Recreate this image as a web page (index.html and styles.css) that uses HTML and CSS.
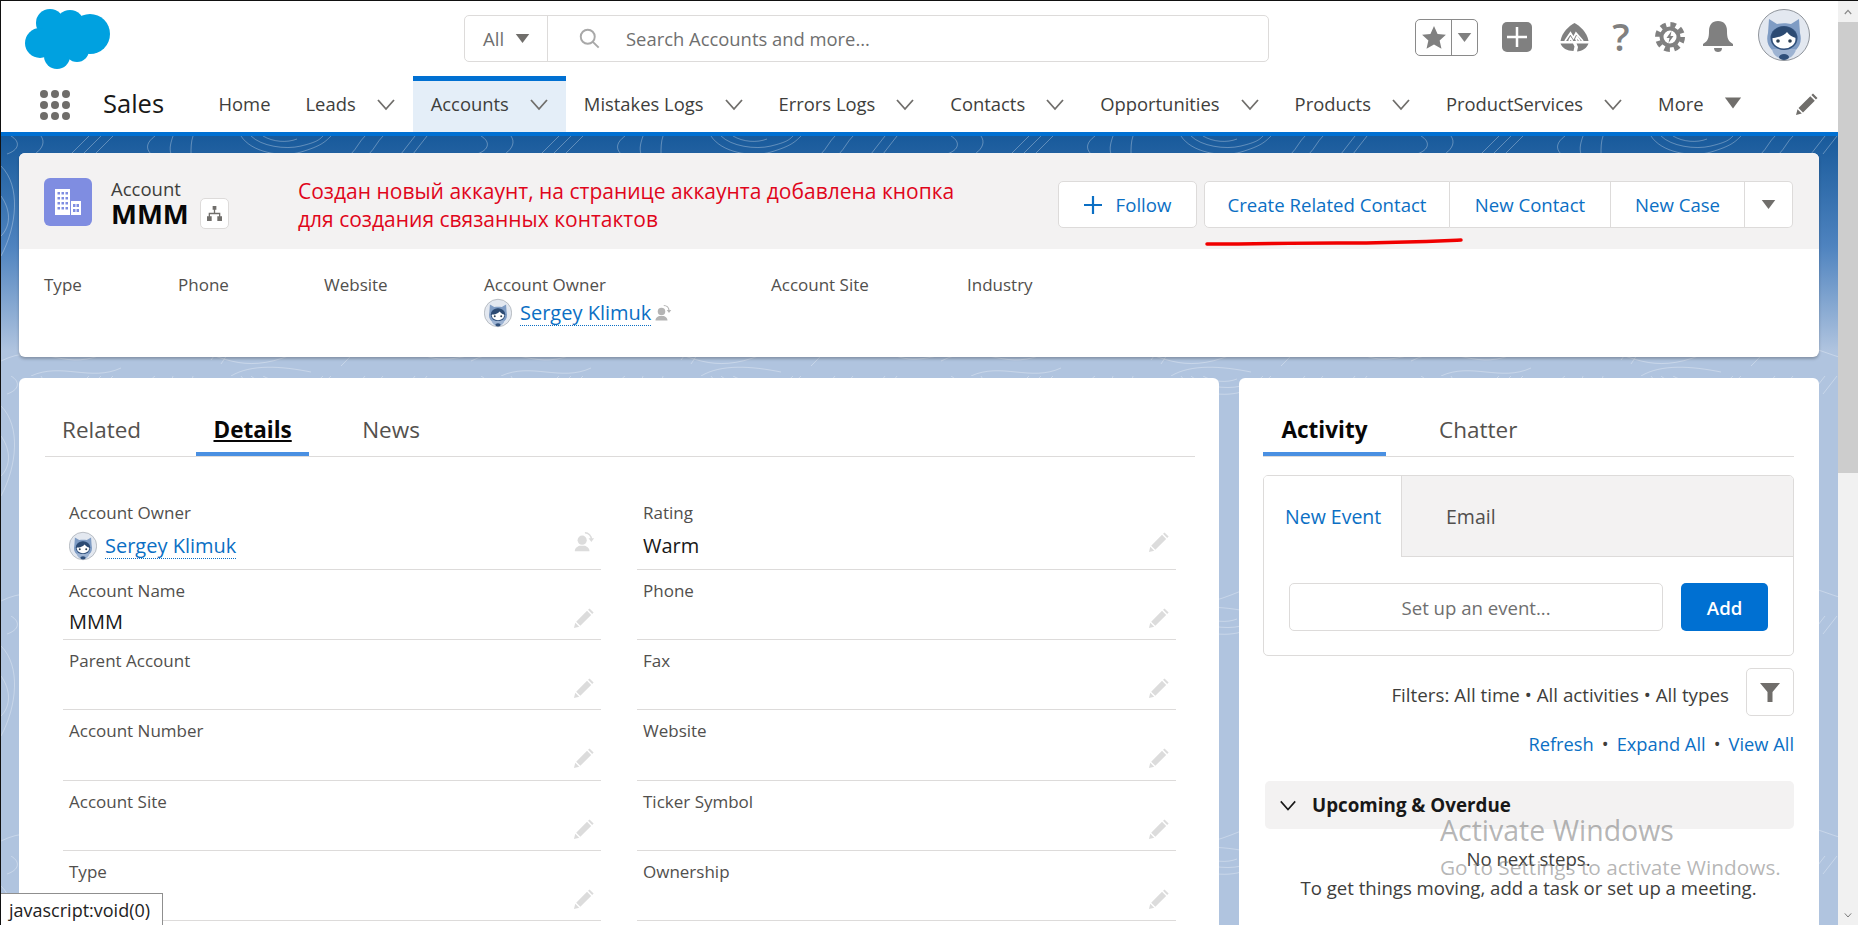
FILE: index.html
```html
<!DOCTYPE html>
<html lang="en">
<head>
    <meta charset="UTF-8">
    <title>MMM | Salesforce</title>
    <link rel="stylesheet" href="styles.css">
</head>
<body>
    <svg class="icon-defs" width="0" height="0">
        <defs>
            <symbol id="pencil" viewBox="0 0 24 24"><path d="M18 1.5l4.5 4.5-1.6 1.6-4.5-4.5zM15.3 4.2l4.5 4.5L8 20.500l-4.500-4.500zM2.500 17.200l4.300 4.300-5.800 1.500z"/></symbol>
            <symbol id="chevron" viewBox="0 0 20 20"><path d="M2 6l8 9 8-9" fill="none" stroke="currentColor" stroke-width="1.800"/></symbol>
            <symbol id="caret" viewBox="0 0 20 20"><path d="M1 4h18l-9 12z"/></symbol>
            <symbol id="person-swap" viewBox="0 0 24 24"><circle cx="10" cy="10" r="5"/><path d="M2 22c0-4 3-5 5-6h6c2 1 5 2 5 6z"/><path d="M13 2c4 0 7 3 7 7" fill="none" stroke="currentColor" stroke-width="1.600"/><path d="M17 8h6l-3 4z"/></symbol>
            <symbol id="astro" viewBox="0 0 52 52">
                <circle cx="26" cy="26" r="25.500" fill="#e3e8f0" stroke="#8f949b"/>
                <path d="M11 10l8 5c4-1 10-1 14 0l8-5 1 14c2 8 0 13-4 17H14c-4-4-6-9-4-17z" fill="#7f9cc4"/>
                <path d="M14 40h24c-1 6-6 10-12 10s-11-4-12-10z" fill="#9db3d2"/>
                <ellipse cx="26" cy="48" rx="5" ry="3" fill="#2f4f7a"/>
                <ellipse cx="26" cy="29" rx="13.500" ry="12" fill="#2f4f7a"/>
                <ellipse cx="26" cy="30" rx="11.500" ry="9.500" fill="#fff"/>
                <path d="M14 29c0-7 6-11 12-11s12 4 12 11c-4-1-7-3-9-6-2 3-9 6-15 6z" fill="#2c4a72"/>
                <circle cx="20" cy="32" r="1.800" fill="#2c3e50"/><circle cx="32" cy="32" r="1.800" fill="#2c3e50"/>
            </symbol>
        </defs>
    </svg>

    <div class="page">
        <header class="top-bar">
            <svg class="logo" viewBox="0 0 86 61" width="86" height="61" fill="#00a1e0">
                <circle cx="25" cy="14" r="14"/><circle cx="45" cy="15" r="14"/><circle cx="65" cy="25" r="20"/><circle cx="15" cy="34" r="15"/><circle cx="32" cy="47" r="13"/><circle cx="52" cy="41" r="12"/><rect x="18" y="14" width="45" height="28"/>
            </svg>
            <div class="search">
                <div class="search-scope">All <svg class="caret-sm" width="15" height="15"><use href="#caret"/></svg></div>
                <div class="search-field">
                    <svg width="21" height="21" viewBox="0 0 24 24" fill="none" stroke="#a8a8a8" stroke-width="2.200"><circle cx="10" cy="10" r="8"/><path d="M15.500 15.500l7 7"/></svg>
                    <span>Search Accounts and more...</span>
                </div>
            </div>
            <div class="global-actions">
                <div class="fav-group">
                    <div class="fav-star"><svg width="26" height="26" viewBox="0 0 24 24" fill="#808080"><path d="M12 1l3.300 7.300 7.700.8-5.800 5.200 1.700 7.700L12 18.100 5.100 22l1.700-7.700L1 9.100l7.700-.8z"/></svg></div>
                    <div class="fav-caret"><svg width="15" height="15" fill="#808080"><use href="#caret"/></svg></div>
                </div>
                <div class="plus-box"><svg width="20" height="20" viewBox="0 0 20 20" stroke="#fff" stroke-width="2.500"><path d="M10 0v20M0 10h20"/></svg></div>
                <svg class="trail" width="29" height="29" viewBox="0 0 29 29" fill="#808080">
                    <path d="M14.500 0C20 3 27 9 28.500 18H.5C2 9 9 3 14.500 0z"/>
                    <path d="M.5 20.500h12.500l1.500 3-1 4.500C7 28 2 25 .5 20.500zM16.500 20.500h12C27 25 22.500 28 17 28.500l1-4.500z"/>
                    <path d="M5 18l5.500-8 3 5 2.500-5 7 8M9 18l1.500-3 2 3M17 18l-1-2 1-2 3 4" fill="none" stroke="#fff" stroke-width="1.800"/>
                </svg>
                <span class="help">?</span>
                <svg class="gear" width="30" height="30" viewBox="0 0 30 30">
                    <circle cx="15" cy="15" r="12.500" fill="none" stroke="#808080" stroke-width="5" stroke-dasharray="5.500 4.320"/>
                    <circle cx="15" cy="15" r="8.500" fill="none" stroke="#808080" stroke-width="4"/>
                    <path d="M16.500 9l-5 7h3l-1 5 5-7h-3z" fill="#808080"/>
                </svg>
                <svg class="bell" width="30" height="32" viewBox="0 0 30 32" fill="#808080"><path d="M15 0c6 0 9 4 9 10 0 7 1 10 6 13v2H0v-2c5-3 6-6 6-13 0-6 3-10 9-10z"/><path d="M11 27h8c0 3-2 4-4 4s-4-1-4-4z"/></svg>
                <svg class="avatar-lg" width="52" height="52"><use href="#astro"/></svg>
            </div>
        </header>

        <nav class="nav-bar">
            <svg class="app-launcher" width="32" height="32" viewBox="0 0 32 32" fill="#706e6b">
                <circle cx="5" cy="5" r="4"/><circle cx="16" cy="5" r="4"/><circle cx="27" cy="5" r="4"/>
                <circle cx="5" cy="16" r="4"/><circle cx="16" cy="16" r="4"/><circle cx="27" cy="16" r="4"/>
                <circle cx="5" cy="27" r="4"/><circle cx="16" cy="27" r="4"/><circle cx="27" cy="27" r="4"/>
            </svg>
            <span class="app-name">Sales</span>
            <a class="nav-item nav-home">Home</a>
            <a class="nav-item">Leads <svg class="nav-chev"><use href="#chevron"/></svg></a>
            <a class="nav-item nav-active">Accounts <svg class="nav-chev"><use href="#chevron"/></svg></a>
            <a class="nav-item">Mistakes Logs <svg class="nav-chev"><use href="#chevron"/></svg></a>
            <a class="nav-item">Errors Logs <svg class="nav-chev"><use href="#chevron"/></svg></a>
            <a class="nav-item">Contacts <svg class="nav-chev"><use href="#chevron"/></svg></a>
            <a class="nav-item">Opportunities <svg class="nav-chev"><use href="#chevron"/></svg></a>
            <a class="nav-item">Products <svg class="nav-chev"><use href="#chevron"/></svg></a>
            <a class="nav-item">ProductServices <svg class="nav-chev"><use href="#chevron"/></svg></a>
            <a class="nav-item">More <svg class="nav-caret" fill="#706e6b"><use href="#caret"/></svg></a>
            <svg class="nav-pencil" width="24" height="24" fill="#706e6b"><use href="#pencil"/></svg>
        </nav>

        <main class="content">
            <svg class="topo" width="1838" height="789">
                <defs>
                    <pattern id="topo-lines" width="470" height="240" patternUnits="userSpaceOnUse">
                        <g fill="none" stroke="#fff" stroke-opacity=".3">
                            <path d="M10 0c10 6 8 14-4 18M40 0c4 6 2 12-6 18M70 18l18-18M82 18l18-18M94 18l18-18"/>
                            <path d="M150 18c-6-6-4-12 4-18M170 18c-2-6 0-12 2-18M190 18c0-6 0-12 2-18"/>
                            <path d="M240 0c10 16 40 22 60 16s24-10 30-16M250 0c10 10 34 14 50 10s18-6 22-10M262 0c10 6 24 7 34 3"/>
                            <path d="M350 18c6-6 8-12 14-18M368 18c6-6 8-12 14-18M400 18l14-18M412 18l14-18"/>
                            <path d="M0 225c40-20 60 10 100-6s40-20 80-10 60 30 110 10 60-20 100-10 40 20 80 10M30 240c30-14 60 6 90-8M230 240c20-12 50-10 80-4"/>
                            <path d="M200 220l16-20M210 224l16-22M220 228l16-24M340 230c10-10 20-20 24-30"/>
                            <path d="M0 30c20 20 16 60 0 90M0 60c10 14 10 30 0 40M452 120c16 14 18 40 18 70M440 150c10 10 14 30 14 50"/>
                        </g>
                    </pattern>
                </defs>
                <rect width="1838" height="789" fill="url(#topo-lines)"/>
            </svg>

            <section class="highlights">
                <div class="highlights-head">
                    <div class="record-icon">
                        <svg width="26" height="26" viewBox="0 0 26 26" fill="#fff">
                            <path d="M0 0h15v26H0zM2.500 3v2.500H5V3zm4 0v2.500H9V3zm4 0v2.500H13V3zM2.500 8v2.500H5V8zm4 0v2.500H9V8zm4 0v2.500H13V8zM2.500 13v2.500H5V13zm4 0v2.500H9V13zm4 0v2.500H13V13zM2.500 18v2.500H5V18zm4 0v2.500H9V18zm4 0v2.500H13V18z" fill-rule="evenodd"/>
                            <path d="M16 12h10v14H16zm2 3v3h2.500v-3zm3.500 0v3H24v-3zM18 20v3h2.500v-3zm3.500 0v3H24v-3z" fill-rule="evenodd"/>
                        </svg>
                    </div>
                    <div class="record-title">
                        <div class="record-type">Account</div>
                        <div class="record-name">MMM <span class="hierarchy-btn">
                            <svg width="15" height="15" viewBox="0 0 16 16" fill="#706e6b"><path d="M6 0h4v4H6zM0 11h5v5H0zM11 11h5v5h-5zM7.300 4h1.400v3.300h5.500V11h-1.400V8.700H3.200V11H1.800V7.300h5.500z"/></svg>
                        </span></div>
                    </div>
                    <div class="note">Создан новый аккаунт, на странице аккаунта добавлена кнопка<br>для создания связанных контактов</div>
                    <div class="head-actions">
                        <button class="btn btn-follow"><svg width="18" height="18" viewBox="0 0 18 18" stroke="#0b6fc4" stroke-width="2.200"><path d="M9 0v18M0 9h18"/></svg> Follow</button>
                        <div class="btn-group">
                            <button class="btn-seg seg-related">Create Related Contact</button>
                            <button class="btn-seg seg-contact">New Contact</button>
                            <button class="btn-seg seg-case">New Case</button>
                            <button class="btn-seg seg-more"><svg width="15" height="15" fill="#706e6b"><use href="#caret"/></svg></button>
                        </div>
                    </div>
                </div>
                <div class="highlights-body">
                    <div class="hl-col hl-type">Type</div>
                    <div class="hl-col hl-phone">Phone</div>
                    <div class="hl-col hl-web">Website</div>
                    <div class="hl-col hl-owner">Account Owner
                        <div class="owner-line">
                            <svg width="28" height="30"><use href="#astro"/></svg>
                            <a class="user-link">Sergey Klimuk</a>
                            <svg class="swap-icon" width="18" height="18" fill="#b4b4b4" color="#b4b4b4"><use href="#person-swap"/></svg>
                        </div>
                    </div>
                    <div class="hl-col hl-site">Account Site</div>
                    <div class="hl-col">Industry</div>
                </div>
            </section>

            <div class="columns">
                <section class="card details-card">
                    <div class="tabs tabs-left">
                        <span class="tab">Related</span>
                        <span class="tab tab-details">Details</span>
                        <span class="tab">News</span>
                    </div>
                    <div class="fields">
                        <div class="field field-first">
                            <div class="field-label">Account Owner</div>
                            <div class="field-value">
                                <span class="owner-line owner-line-field">
                                    <svg width="28" height="30"><use href="#astro"/></svg>
                                    <a class="user-link">Sergey Klimuk</a>
                                </span>
                                <svg class="edit-icon" fill="#dcdcdc" color="#dcdcdc"><use href="#person-swap"/></svg>
                            </div>
                        </div>
                        <div class="field field-first">
                            <div class="field-label">Rating</div>
                            <div class="field-value">Warm <svg class="edit-icon"><use href="#pencil"/></svg></div>
                        </div>
                        <div class="field">
                            <div class="field-label">Account Name</div>
                            <div class="field-value">MMM <svg class="edit-icon"><use href="#pencil"/></svg></div>
                        </div>
                        <div class="field">
                            <div class="field-label">Phone</div>
                            <div class="field-value"><svg class="edit-icon"><use href="#pencil"/></svg></div>
                        </div>
                        <div class="field">
                            <div class="field-label">Parent Account</div>
                            <div class="field-value"><svg class="edit-icon"><use href="#pencil"/></svg></div>
                        </div>
                        <div class="field">
                            <div class="field-label">Fax</div>
                            <div class="field-value"><svg class="edit-icon"><use href="#pencil"/></svg></div>
                        </div>
                        <div class="field">
                            <div class="field-label">Account Number</div>
                            <div class="field-value"><svg class="edit-icon"><use href="#pencil"/></svg></div>
                        </div>
                        <div class="field">
                            <div class="field-label">Website</div>
                            <div class="field-value"><svg class="edit-icon"><use href="#pencil"/></svg></div>
                        </div>
                        <div class="field">
                            <div class="field-label">Account Site</div>
                            <div class="field-value"><svg class="edit-icon"><use href="#pencil"/></svg></div>
                        </div>
                        <div class="field">
                            <div class="field-label">Ticker Symbol</div>
                            <div class="field-value"><svg class="edit-icon"><use href="#pencil"/></svg></div>
                        </div>
                        <div class="field">
                            <div class="field-label">Type</div>
                            <div class="field-value"><svg class="edit-icon"><use href="#pencil"/></svg></div>
                        </div>
                        <div class="field">
                            <div class="field-label">Ownership</div>
                            <div class="field-value"><svg class="edit-icon"><use href="#pencil"/></svg></div>
                        </div>
                    </div>
                </section>

                <section class="card activity-card">
                    <div class="tabs tabs-right">
                        <span class="tab tab-activity">Activity</span>
                        <span class="tab">Chatter</span>
                    </div>
                    <div class="composer">
                        <div class="composer-tabs">
                            <span class="composer-tab composer-tab-on">New Event</span>
                            <span class="composer-tab">Email</span>
                        </div>
                        <div class="composer-body">
                            <div class="composer-input">Set up an event...</div>
                            <button class="btn-add">Add</button>
                        </div>
                    </div>
                    <div class="filters">
                        <span class="filters-text">Filters: All time • All activities • All types</span>
                        <span class="filter-btn"><svg width="20" height="20" viewBox="0 0 20 20" fill="#706e6b"><path d="M0 1h20l-7.500 9v10h-5V10z"/></svg></span>
                    </div>
                    <div class="activity-links"><a>Refresh</a><span class="link-sep">•</span><a>Expand All</a><span class="link-sep">•</span><a>View All</a></div>
                    <div class="upcoming">
                        <svg width="18" height="18" color="#181818"><use href="#chevron"/></svg>
                        <span>Upcoming &amp; Overdue</span>
                    </div>
                    <div class="no-steps">No next steps.<br>To get things moving, add a task or set up a meeting.</div>
                </section>
            </div>
        </main>

        <!-- marker drawn over the screenshot -->
        <svg class="red-mark" width="260" height="10" viewBox="0 0 260 10"><path d="M3 7c60 0 70-1 130-1s80-1 124-3" fill="none" stroke="#f00000" stroke-width="3.500" stroke-linecap="round"/></svg>

        <div class="watermark">
            <div class="watermark-title">Activate Windows</div>
            <div class="watermark-sub">Go to Settings to activate Windows.</div>
        </div>
        <div class="status-tip">javascript:void(0)</div>
    </div>

    <div class="scrollbar">
        <div class="scroll-btn"><svg width="10" height="8" viewBox="0 0 20 20" color="#8a8a8a"><path d="M2 15l8-9 8 9" fill="none" stroke="currentColor" stroke-width="3"/></svg></div>
        <div class="scroll-thumb"></div>
        <div class="scroll-track"></div>
        <div class="scroll-btn scroll-btn-down"><svg width="10" height="8" viewBox="0 0 20 20" color="#505050"><use href="#chevron"/></svg></div>
    </div>
</body>
</html>
```

FILE: styles.css
```css
* {
    box-sizing: border-box;
}

html, body {
    height: 925px;
    margin: 0;
    overflow: hidden;
}

body {
    display: flex;
    width: 1858px;
    border-top: 1px solid #111;
    font-family: "Open Sans", "Noto Sans", sans-serif;
    font-size: 18.600px;
    color: #3e3e3c;
    background: #fff;
}

a {
    color: inherit;
}

button {
    font-family: inherit;
}

.icon-defs {
    position: absolute;
}

.page {
    position: relative;
    flex: 0 0 1838px;
    height: 924px;
    border-left: 1px solid #111;
    overflow: hidden;
    background: #fff;
}

/* top bar */
.top-bar {
    display: flex;
    align-items: flex-start;
    height: 75px;
    padding-left: 24px;
}

.logo {
    margin-top: 8px;
}

.search {
    display: flex;
    width: 805px;
    height: 47px;
    margin: 14px 0 0 353px;
    border: 1px solid #dddbda;
    border-radius: 5px;
    color: #6f6f6f;
}

.search-scope {
    display: flex;
    align-items: center;
    gap: 11px;
    width: 83px;
    padding-left: 18px;
    border-right: 1px solid #dddbda;
}

.caret-sm {
    fill: #706e6b;
}

.search-field {
    display: flex;
    align-items: center;
    gap: 26px;
    padding-left: 31px;
    font-size: 18.400px;
}

.global-actions {
    display: flex;
    align-items: center;
    margin-left: 146px;
    height: 75px;
}

.fav-group {
    display: flex;
    width: 63px;
    height: 37px;
    margin-top: -2px;
    border: 1px solid #8a8a8a;
    border-radius: 5px;
}

.fav-star {
    display: flex;
    align-items: center;
    justify-content: center;
    width: 36px;
    border-right: 1px solid #8a8a8a;
}

.fav-caret {
    display: flex;
    align-items: center;
    justify-content: center;
    flex: 1;
}

.plus-box {
    display: flex;
    align-items: center;
    justify-content: center;
    width: 30px;
    height: 30px;
    margin: -3px 28px 0 24px;
    border-radius: 5px;
    background: #808080;
}

.trail {
    margin-top: -3px;
}

.help {
    width: 24px;
    margin: -6px 22px 0 20px;
    font-size: 38px;
    font-weight: 600;
    line-height: 1;
    color: #808080;
    text-align: center;
}

.gear {
    margin: -3px 18px 0 0;
}

.bell {
    margin: -3px 0 0 0;
}

.avatar-lg {
    margin: -8px 0 0 25px;
}

/* app nav */
.nav-bar {
    display: flex;
    align-items: stretch;
    height: 60px;
    border-bottom: 4px solid #0070d2;
}

.app-launcher {
    align-self: center;
    margin: 2px 0 0 38px;
}

.app-name {
    align-self: center;
    width: 98px;
    margin-left: 32px;
    padding-bottom: 2px;
    font-size: 25.500px;
    color: #181818;
}

.nav-item {
    display: flex;
    align-items: center;
    gap: 20px;
    padding: 0 17.500px 2px;
    font-size: 18.400px;
    color: #3e3e3c;
    white-space: nowrap;
}

.nav-active {
    background: #e4eef8;
    box-shadow: inset 0 5px 0 #0070d2;
}

.nav-chev {
    width: 20px;
    height: 20px;
    color: #706e6b;
    margin-top: 2px;
}

.nav-caret {
    width: 18px;
    height: 18px;
    margin-top: -1px;
}

.nav-pencil {
    align-self: center;
    margin-left: 36px;
}

/* page body */
.content {
    position: relative;
    height: 789px;
    padding: 17px 19px 0 18px;
    overflow: hidden;
    background: linear-gradient(to bottom, #185a9b 0, #4e83bf 110px, #b0c4df 215px, #b0c4df 100%);
}

.topo {
    position: absolute;
    top: 0;
    left: 0;
}

.highlights, .columns {
    position: relative;
}

.highlights {
    height: 204px;
    border-radius: 6px;
    overflow: hidden;
    background: #fff;
    box-shadow: 0 2px 3px rgba(0, 0, 0, 0.25);
}

.highlights-head {
    display: flex;
    height: 96px;
    padding: 25px 0 0 25px;
    background: #f3f2f2;
}

.record-icon {
    display: flex;
    align-items: center;
    justify-content: center;
    width: 48px;
    height: 48px;
    border-radius: 6px;
    background: #7f8de1;
}

.record-title {
    width: 187px;
    margin-left: 19px;
}

.record-type {
    font-size: 18.500px;
    line-height: 23px;
    margin-top: -1px;
    color: #3e3e3c;
}

.record-name {
    display: flex;
    align-items: center;
    gap: 11px;
    margin-top: -2px;
    font-size: 27.500px;
    font-weight: 700;
    line-height: 31px;
    color: #080707;
}

.hierarchy-btn {
    display: flex;
    align-items: center;
    justify-content: center;
    width: 29px;
    height: 31px;
    border: 1px solid #dddbda;
    border-radius: 5px;
    background: #fff;
}

.note {
    width: 760px;
    margin-top: -1px;
    font-size: 21px;
    line-height: 28px;
    color: #e0061b;
    white-space: nowrap;
}

.head-actions {
    display: flex;
    gap: 7px;
    margin: 3px 0 0 0;
}

.btn, .btn-seg {
    height: 47px;
    border: 1px solid #dddbda;
    background: #fff;
    color: #0b6fc4;
    font-size: 18.600px;
}

.btn {
    display: flex;
    align-items: center;
    justify-content: center;
    gap: 14px;
    width: 139px;
    border-radius: 5px;
}

.btn-group {
    display: flex;
}

.btn-seg {
    padding: 0;
    border-left: 0;
}

.seg-related {
    width: 246px;
    border-left: 1px solid #dddbda;
    border-radius: 5px 0 0 5px;
}

.seg-contact {
    width: 161px;
}

.seg-case {
    width: 134px;
}

.seg-more {
    display: flex;
    align-items: center;
    justify-content: center;
    width: 48px;
    border-radius: 0 5px 5px 0;
}

.highlights-body {
    display: flex;
    padding: 26px 0 0 25px;
    font-size: 17px;
    line-height: 20px;
    color: #514f4d;
}

.hl-type {
    width: 134px;
}

.hl-phone {
    width: 146px;
}

.hl-web {
    width: 160px;
}

.hl-owner {
    width: 287px;
}

.hl-site {
    width: 196px;
}

.owner-line {
    display: flex;
    align-items: center;
    gap: 8px;
    margin-top: 3px;
}

.user-link {
    font-size: 20px;
    line-height: 24px;
    color: #0b6fc4;
    border-bottom: 1px dotted #0b6fc4;
}

.swap-icon {
    margin-left: -5px;
}

.columns {
    display: grid;
    grid-template-columns: 1200px 580px;
    gap: 20px;
    margin-top: 21px;
}

.card {
    height: 560px;
    border-radius: 6px;
    background: #fff;
}

.tabs {
    display: flex;
    height: 79px;
    border-bottom: 1px solid #dddbda;
    font-size: 22.500px;
    color: #54514e;
}

.tab {
    display: flex;
    align-items: center;
    height: 78px;
    padding-top: 24px;
    white-space: nowrap;
}

.tabs-left {
    margin: 0 24px 0 26px;
    padding-left: 17px;
}

.tabs-left .tab {
    margin-right: 55px;
}

.tabs-left .tab-details {
    width: 113px;
    justify-content: center;
    margin-right: 53px;
    font-weight: 700;
    color: #080707;
    text-decoration: underline;
    box-shadow: inset 0 -4px 0 #4a90e2;
}

.tabs-right {
    margin: 0 25px 0 24px;
}

.tab-activity {
    width: 123px;
    justify-content: center;
    margin-right: 53px;
    font-weight: 700;
    color: #080707;
    box-shadow: inset 0 -4px 0 #4a90e2;
}

.fields {
    display: grid;
    grid-template-columns: 538px 539px;
    grid-template-rows: 77px repeat(5, 70.200px);
    column-gap: 36px;
    margin: 36px 0 0 44px;
}

.field {
    padding: 11px 6px 0 6px;
    border-bottom: 1px solid #dddbda;
}

.field-label {
    font-size: 17px;
    line-height: 20px;
    color: #514f4d;
}

.field-first .field-label {
    margin-top: -1px;
}

.field-value {
    display: flex;
    justify-content: space-between;
    height: 28px;
    margin-top: 7px;
    font-size: 20px;
    line-height: 28px;
    color: #181818;
}

.field-first .field-value {
    margin-top: 9px;
}

.field-value .owner-line-field {
    margin-top: 0;
}

.edit-icon {
    width: 22px;
    height: 22px;
    margin-left: auto;
    margin-top: -1px;
    fill: #dcdcdc;
    flex: none;
}

/* activity panel */
.composer {
    height: 181px;
    margin: 18px 25px 0 24px;
    border: 1px solid #dddbda;
    border-radius: 5px;
    overflow: hidden;
}

.composer-tabs {
    display: flex;
    height: 81px;
    background: #f3f2f2;
    border-bottom: 1px solid #dddbda;
    font-size: 19.500px;
}

.composer-tab {
    display: flex;
    align-items: center;
    padding-left: 44px;
    color: #514f4d;
}

.composer-tab-on {
    width: 138px;
    height: 81px;
    padding-left: 21px;
    background: #fff;
    border-right: 1px solid #dddbda;
    color: #0b6fc4;
}

.composer-body {
    display: flex;
    gap: 18px;
    padding: 26px 25px 0 25px;
}

.composer-input {
    display: flex;
    align-items: center;
    justify-content: center;
    width: 375px;
    height: 48px;
    border: 1px solid #dddbda;
    border-radius: 5px;
    color: #6f6f6f;
}

.btn-add {
    width: 87px;
    height: 48px;
    border: 0;
    border-radius: 5px;
    background: #0070d2;
    color: #fff;
    font-size: 18.600px;
    font-weight: 600;
}

.filters {
    display: flex;
    justify-content: flex-end;
    align-items: center;
    gap: 17px;
    margin: 12px 25px 0 24px;
    color: #3e3e3c;
}

.filters-text {
    padding-top: 5px;
    font-size: 18.800px;
}

.filter-btn {
    display: flex;
    align-items: center;
    justify-content: center;
    width: 48px;
    height: 48px;
    border: 1px solid #dddbda;
    border-radius: 5px;
}

.activity-links {
    margin: 14px 25px 0 24px;
    font-size: 18.300px;
    line-height: 28px;
    text-align: right;
    color: #3e3e3c;
}

.activity-links a {
    color: #0b6fc4;
}

.link-sep {
    margin: 0 8px;
}

.upcoming {
    display: flex;
    align-items: center;
    gap: 15px;
    height: 48px;
    margin: 23px 25px 0 26px;
    padding-left: 14px;
    border-radius: 5px;
    background: #f3f2f2;
    font-size: 18.800px;
    font-weight: 700;
    color: #181818;
}

.no-steps {
    margin: 15px 25px 0 24px;
    padding-bottom: 23px;
    border-bottom: 1px solid #dddbda;
    line-height: 29px;
    text-align: center;
    color: #3e3e3c;
}

/* things lying over the page */
.red-mark {
    position: absolute;
    top: 236px;
    left: 1203px;
}

.watermark {
    position: absolute;
    top: 810px;
    left: 1439px;
    color: rgba(120, 120, 120, 0.55);
    pointer-events: none;
}

.watermark-title {
    font-size: 28.500px;
    line-height: 38px;
}

.watermark-sub {
    font-size: 20.800px;
    line-height: 36px;
}

.status-tip {
    position: absolute;
    left: -1px;
    bottom: 0;
    width: 163px;
    height: 32px;
    padding-left: 8px;
    border: 1px solid #8f8f8f;
    border-bottom: 0;
    background: #fff;
    font-size: 18px;
    line-height: 32px;
    color: #222;
}

/* window scrollbar */
.scrollbar {
    display: flex;
    flex-direction: column;
    flex: 0 0 20px;
    height: 924px;
    background: #f1f1f1;
}

.scroll-btn {
    display: flex;
    align-items: center;
    justify-content: center;
    height: 21px;
    background: #f1f1f1;
}

.scroll-thumb {
    height: 451px;
    background: #cdcdcd;
}

.scroll-track {
    flex: 1;
}
```
